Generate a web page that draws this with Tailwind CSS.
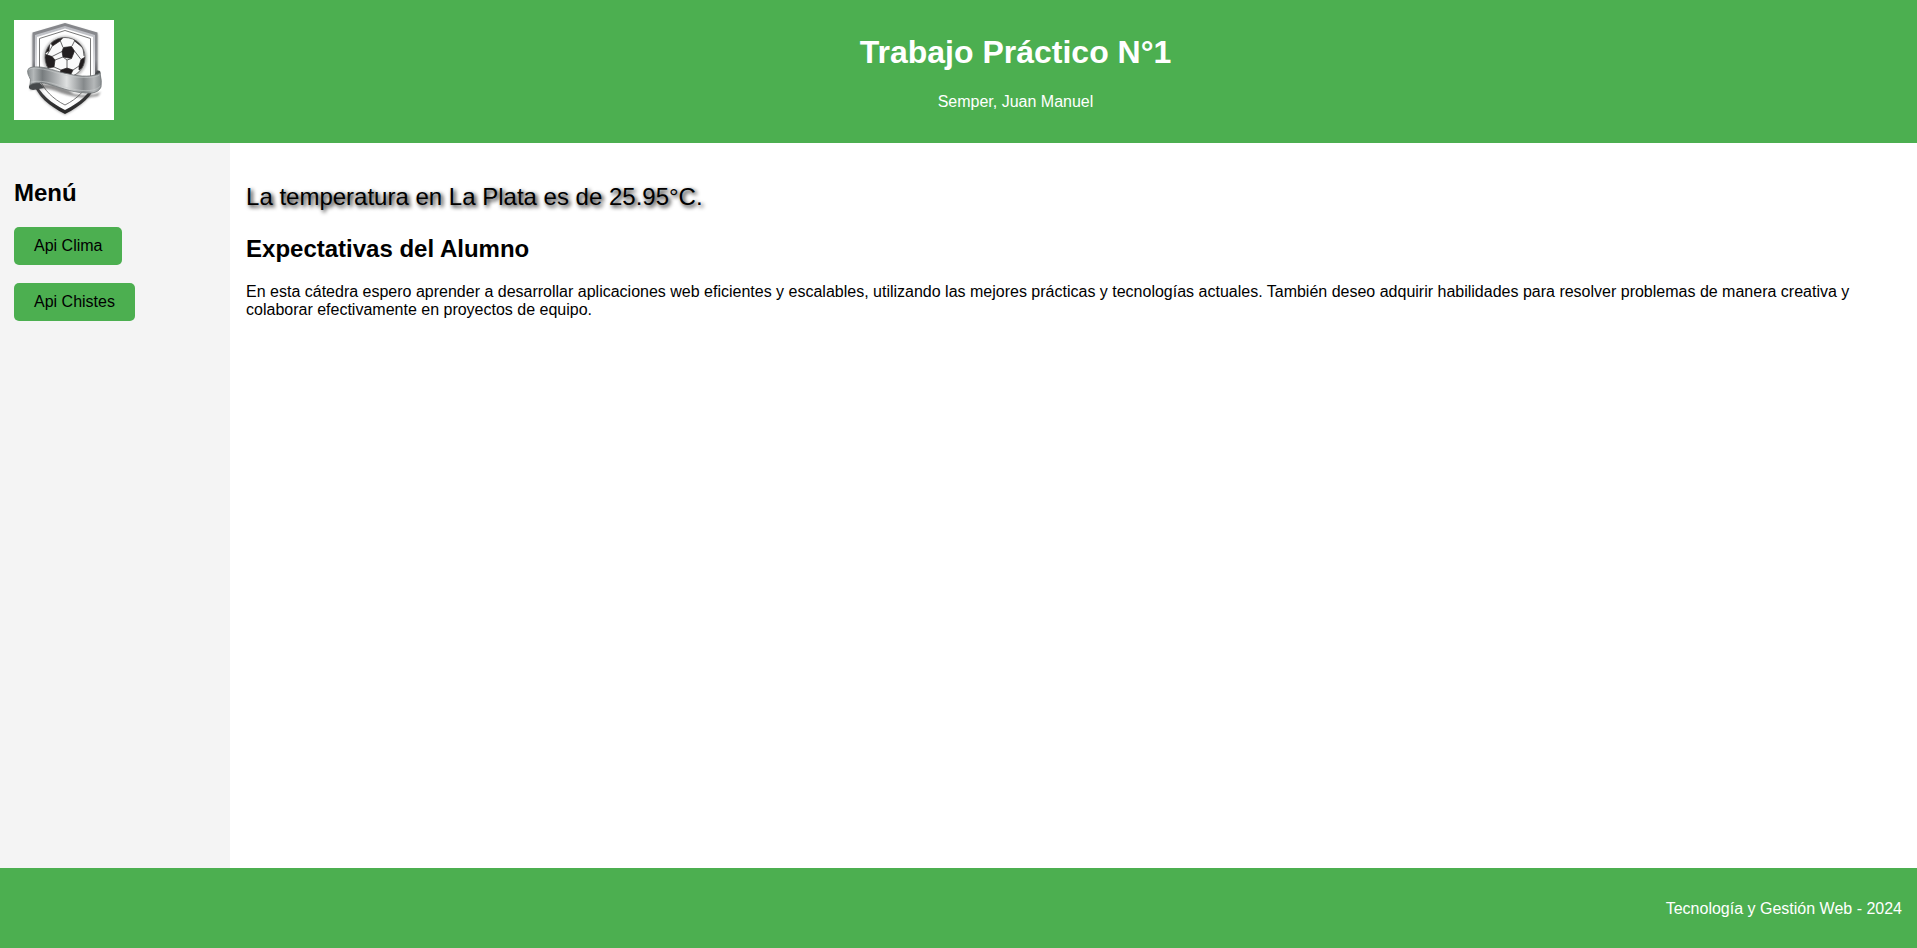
<!DOCTYPE html>
<html lang="es">
<head>
<meta charset="utf-8">
<meta name="viewport" content="width=device-width, initial-scale=1">
<title>Trabajo Práctico N°1</title>
<script src="https://cdn.jsdelivr.net/npm/@tailwindcss/browser@4"></script>
</head>
<body class="flex min-h-screen flex-col bg-white font-['Liberation_Sans',Arial,sans-serif] text-base leading-[18px] text-black">
<header class="flex items-start bg-[#4caf50] pt-5 pb-[23px] pl-[14px] text-white">
  <svg class="size-[100px] shrink-0 bg-white" viewBox="0 0 100 100" role="img" aria-label="Escudo de fútbol">
    <defs>
      <linearGradient id="frame" x1="0" y1="0" x2="0" y2="1">
        <stop offset="0" stop-color="#85868a"/><stop offset=".4" stop-color="#8e8f94"/><stop offset=".65" stop-color="#4a4a4c"/><stop offset="1" stop-color="#262626"/>
      </linearGradient>
      <linearGradient id="bevel" x1="0" y1="0" x2="0" y2="1">
        <stop offset="0" stop-color="#b9bbc0"/><stop offset=".5" stop-color="#e2e2e5"/><stop offset="1" stop-color="#ffffff"/>
      </linearGradient>
      <linearGradient id="silver">
        <stop offset="0" stop-color="#8b9092"/><stop offset=".08" stop-color="#b4b8b9"/><stop offset=".2" stop-color="#777c7e"/><stop offset=".42" stop-color="#b9bcbd"/><stop offset=".53" stop-color="#dfe1e1"/><stop offset=".76" stop-color="#85898b"/><stop offset=".9" stop-color="#b5b8b9"/><stop offset="1" stop-color="#898e90"/>
      </linearGradient>
      <filter id="soft" x="-20%" y="-20%" width="140%" height="140%"><feGaussianBlur stdDeviation="1.2"/></filter>
      <clipPath id="ball"><circle cx="51" cy="37.500" r="20"/></clipPath>
    </defs>
    <path d="M51 4 84 14V61C79 77 67 87 51 95C35 87 23 77 18 61V14Z" fill="#777" opacity=".5" filter="url(#soft)"/>
    <path d="M51 3 83.500 12.500V61C79 76 67 86 51 94C35 86 23 76 18.500 61V12.500Z" fill="url(#frame)"/>
    <path d="M51 6 81 15V61C76 74 65 83 51 90C37 83 26 74 21 61V15Z" fill="url(#bevel)"/>
    <path d="M51 8.500 79 17V60C74 73 64 81 51 87.500C38 81 28 73 23 60V17Z" fill="#fff"/>
    <path d="M51 10.500 76.500 18.500V59C72 70 63 79 51 85C39 79 30 70 25.500 59V18.500Z" fill="#fff" stroke="#555" stroke-width=".8"/>
    <circle cx="51" cy="38" r="22" fill="#888" opacity=".55" filter="url(#soft)"/>
    <g clip-path="url(#ball)">
      <circle cx="51" cy="37.500" r="20" fill="#fafafa"/>
      <g fill="#231f20" stroke="#231f20" stroke-width=".7">
        <path d="M49.500 27.500 57.500 26.500 60.500 31 57.500 38.500 49 37 48 31.500Z"/>
        <path d="M37 23Q41 18 49 17.500L46 21 38.500 26Z"/>
        <path d="M60 18 66 22 69 28 65.500 25 60.500 21Z"/>
        <path d="M30 34 38 36.500 41 40 40 47 33 48Z"/>
        <path d="M67 39.500 73 36 71 46 65 50 65 46Z"/>
        <path d="M47 50 53 48 59 50 56 56 45 54Z"/>
        <path d="M31 33 35.500 25 35 31Z"/>
      </g>
      <path d="M46 20 49 27.500M58 26 60.500 21M48 31.500 38 36.500M38.500 25.500 35.500 31 33 35M60.500 31 67 39.500M49 37 41 40M49 37 53 40 57.500 38.500M53 40 53 48M40 47 47 50M59 50 65 46M69 28 70 36" fill="none" stroke="#555" stroke-width=".9"/>
    </g>
    <circle cx="51" cy="37.500" r="20" fill="none" stroke="#555" stroke-width=".8"/>
    <path d="M16 65Q46 61 60 74 78 77 87 72L84 76Q68 80 47 73 31 66 16 70Z" fill="#333" opacity=".55" filter="url(#soft)"/>
    <path d="M17 63Q12 69 19 70L30 68 26 63Z" fill="#46494b"/>
    <path d="M80 56 83 50.500Q88 50 86 55Z" fill="#45484a"/>
    <path d="M14 54Q12 47 20 47C33 46 42 52 55 54 67 57 80 57 86 53Q88 61 87 67 85 72 78 73C62 74 48 68 37 65 28 62 20 62 16 65Q18 60 14 54Z" fill="url(#silver)" stroke="#6f7375" stroke-width=".8"/>
    <path d="M14.500 50Q18 47 25 48.500C38 50 46 55 58 56.500 71 58 80 58 85.500 55M17 62C31 59 45 66 58 69 72 72 82 71 86.500 66" fill="none" stroke="#c9cccc" stroke-width=".6"/>
  </svg>
  <div class="flex-1 pt-[14px] text-center">
    <h1 class="text-[32px] leading-[37px] font-bold">Trabajo Práctico N°1</h1>
    <p class="mt-[22px]">Semper, Juan Manuel</p>
  </div>
</header>
<div class="flex flex-1">
  <nav class="w-[12%] shrink-0 bg-[#f4f4f4] px-[14px] pt-9" aria-labelledby="menu-title">
    <h2 id="menu-title" class="text-2xl leading-7 font-bold">Menú</h2>
    <ul class="mt-5 flex flex-col items-start gap-[18px]">
      <li><button type="button" class="block rounded-[5px] bg-[#4caf50] px-5 py-[10px]">Api Clima</button></li>
      <li><button type="button" class="block rounded-[5px] bg-[#4caf50] px-5 py-[10px]">Api Chistes</button></li>
    </ul>
  </nav>
  <main class="flex-1 px-4 pt-10">
    <p class="text-2xl leading-7 [text-shadow:2px_2px_4px_#000]">La temperatura en La Plata es de 25.95°C.</p>
    <h2 class="mt-6 text-2xl leading-7 font-bold">Expectativas del Alumno</h2>
    <p class="mt-5">En esta cátedra espero aprender a desarrollar aplicaciones web eficientes y escalables, utilizando las mejores prácticas y tecnologías actuales. También deseo adquirir habilidades para resolver problemas de manera creativa y colaborar efectivamente en proyectos de equipo.</p>
  </main>
</div>
<footer class="bg-[#4caf50] px-[15px] pt-8 pb-[30px] text-right text-white">
  <p>Tecnología y Gestión Web - 2024</p>
</footer>
</body>
</html>
